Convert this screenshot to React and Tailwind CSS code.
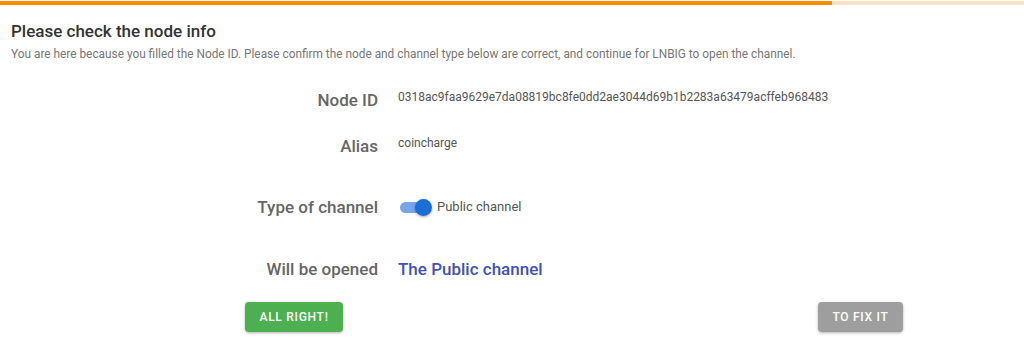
import React from "react";

export default function App() {
  return (
    <div className="w-[1024px] h-[352px] bg-white overflow-hidden" style={{ fontFamily: "Roboto, 'Noto Sans', sans-serif" }}>
      <div className="pt-px">
        <div className="flex h-[4px]">
          <div className="w-[832px] bg-[#fb8c00]" />
          <div className="flex-1 bg-[#fde3c4]" />
        </div>
      </div>
      <div className="px-[11px] mt-[14px]">
        <h1 className="text-[17px] leading-[24px] font-medium text-[#333333]">Please check the node info</h1>
        <p className="mt-[3px] text-[11.85px] leading-[16px] text-[#777777]">
          You are here because you filled the Node ID. Please confirm the node and channel type below are correct, and continue for LNBIG to open the channel.
        </p>
      </div>

      <div className="flex flex-col">
        <div className="flex items-start mt-[26px] h-[24px]">
          <div className="w-[378px] text-right text-[17px] leading-[24px] font-medium text-[#666666]">Node ID</div>
          <div className="ml-5 text-[12px] leading-[18px] text-[#555555]">0318ac9faa9629e7da08819bc8fe0dd2ae3044d69b1b2283a63479acffeb968483</div>
        </div>
        <div className="flex items-start mt-[22px] h-[24px]">
          <div className="w-[378px] text-right text-[17px] leading-[24px] font-medium text-[#666666]">Alias</div>
          <div className="ml-5 text-[12px] leading-[18px] text-[#555555]">coincharge</div>
        </div>
        <div className="flex items-center mt-[30px] h-[38px]">
          <div className="w-[378px] text-right text-[17px] leading-[24px] font-medium text-[#666666]">Type of channel</div>
          <div className="ml-[22px] flex items-center">
            <div className="relative w-[32px] h-[17px] flex items-center">
              <div className="w-[30px] h-[11px] rounded-full bg-[#76a6e9]" />
              <div className="absolute right-0 top-0 w-[17px] h-[17px] rounded-full bg-[#1a6ed6] shadow-[0_1px_3px_rgba(0,0,0,0.35)]" />
            </div>
            <span className="ml-[5px] text-[13px] leading-[18px] text-[#555555]">Public channel</span>
          </div>
        </div>
        <div className="flex items-start mt-[31px] h-[24px]">
          <div className="w-[378px] text-right text-[17px] leading-[24px] font-medium text-[#666666]">Will be opened</div>
          <div className="ml-5 text-[17px] leading-[24px] font-medium text-[#3f51b5]">The Public channel</div>
        </div>
        <div className="flex justify-between ml-[245px] w-[658px] mt-[21px]">
          <button className="w-[98px] h-[30px] rounded-[4px] bg-[#4caf50] text-white text-[12px] font-medium tracking-[0.06em] shadow-[0_1px_3px_rgba(0,0,0,0.3)]">ALL RIGHT!</button>
          <button className="w-[85px] h-[30px] rounded-[4px] bg-[#9e9e9e] text-white text-[12px] font-medium tracking-[0.06em] shadow-[0_1px_3px_rgba(0,0,0,0.3)]">TO FIX IT</button>
        </div>
      </div>
    </div>
  );
}
